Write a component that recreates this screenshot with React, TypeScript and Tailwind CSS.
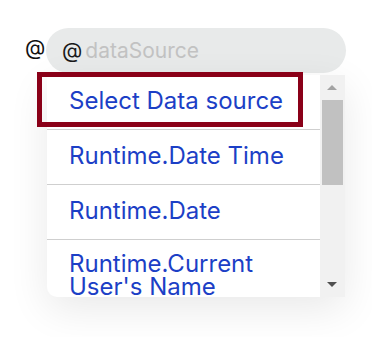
import React from "react";

const items = [
  "Select Data source",
  "Runtime.Date Time",
  "Runtime.Date",
];

export default function App() {
  return (
    <div
      className="relative w-[372px] h-[337px] bg-white overflow-hidden"
      style={{ fontFamily: "Inter, 'Noto Sans', sans-serif" }}
    >
      <div className="flex flex-col pt-[28px]">
        <div className="flex items-start">
          <span className="ml-[25px] mt-[8px] w-[21px] text-[21px] leading-[24px] text-[#111]">@</span>
          <div className="flex items-center w-[300px] h-[45px] rounded-full bg-[#e8eaea] pl-[16px]">
            <span className="text-[21px] leading-[26px] text-[#1a1a1a]">@</span>
            <span className="ml-[3px] text-[21px] leading-[26px] text-[#c2c2c2]">dataSource</span>
          </div>
        </div>
        <div className="relative ml-[47px] mt-[2px] w-[298px] h-[222px] flex rounded-bl-[10px] bg-white shadow-[0_12px_40px_rgba(0,0,0,0.09)]">
          <div className="flex-1 overflow-hidden rounded-bl-[10px]">
            {items.map((t) => (
              <div
                key={t}
                className="h-[55px] flex items-center pl-[22px] pb-[4px] text-[24px] leading-[23px] text-[#1c3fc6] border-b border-[#cfcfcf] whitespace-nowrap"
              >
                {t}
              </div>
            ))}
            <div className="pl-[22px] pt-[12px] pr-[30px] text-[24px] leading-[23px] text-[#1c3fc6]">
              Runtime.Current User's Name
            </div>
          </div>
          <div className="relative w-[25px] h-full bg-[#f1f1f1]">
            <div className="absolute left-[7px] top-[10px] w-0 h-0 border-l-[5px] border-r-[5px] border-b-[5px] border-l-transparent border-r-transparent border-b-[#a3a3a3]" />
            <div className="absolute left-[2px] top-[25px] w-[21px] h-[85px] bg-[#c1c1c1]" />
            <div className="absolute left-[7px] top-[207px] w-0 h-0 border-l-[5px] border-r-[5px] border-t-[5px] border-l-transparent border-r-transparent border-t-[#505050]" />
          </div>
          <div className="absolute left-[-10px] top-[-3px] w-[266px] h-[55px] border-[5px] border-[#8a0018]" />
        </div>
      </div>
    </div>
  );
}
